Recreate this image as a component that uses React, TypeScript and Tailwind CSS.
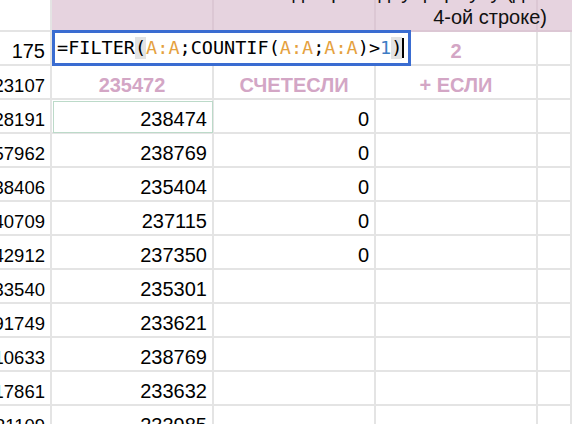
const colA = ["175", "23107", "28191", "57962", "38406", "40709", "42912", "33540", "91749", "10633", "17861", "31109"];
const colB = ["", "", "238474", "238769", "235404", "237115", "237350", "235301", "233621", "238769", "233632", "233985"];
const colC = ["", "", "0", "0", "0", "0", "0", "", "", "", "", ""];

const grid = "grid grid-cols-[52px_162px_162px_162px_1fr]";
const cell = "h-[34px] border-r-2 border-b-2 border-[#e4e4e4] overflow-hidden whitespace-nowrap";
const num = "flex justify-end pr-[5px] pt-[5px] leading-[29px] text-[20px] text-black";
const numA = "flex justify-end pr-[5px] pt-[5px] leading-[29px] text-[18.5px] text-black";
const pink = "flex justify-center pt-[5px] leading-[29px] text-[20px] font-bold text-[#d3a6c5]";

function Formula() {
  const orange = "text-[#e5a13e]";
  return (
    <div className="absolute left-[52px] top-[30px] w-[359px] h-[36px] border-[3px] border-[#3a6cd1] bg-white flex items-center pl-[2px]">
      <span className="font-['DejaVu_Sans_Mono',monospace] text-[18.5px] leading-[22px] text-black flex items-center">
        <span>=FILTER</span>
        <span className="bg-[#e3e3e3]">(</span>
        <span className={orange}>A:A</span>
        <span>;COUNTIF(</span>
        <span className={orange}>A:A</span>
        <span>;</span>
        <span className={orange}>A:A</span>
        <span>)&gt;</span>
        <span className="text-[#3d7cc4]">1</span>
        <span className="bg-[#e3e3e3]">)</span>
        <span className="w-[2px] h-[20px] bg-black" />
      </span>
    </div>
  );
}

export default function App() {
  return (
    <main className="relative w-[572px] h-[424px] overflow-hidden bg-white font-['Liberation_Sans',Arial,sans-serif]">
      {/* header row, clipped at top */}
      <div className={grid}>
        <div className="h-[32px] border-r-2 border-b-2 border-[#e4e4e4]" />
        <div className="h-[32px] bg-[#e6d3df] border-r-2 border-b-2 border-[#dcc7d4]" />
        <div className="col-span-3 h-[32px] bg-[#e6d3df] border-b-2 border-[#dcc7d4] overflow-hidden relative">
          <div className="grid grid-cols-[162px_162px_1fr] h-full">
            <div className="border-r-2 border-[#dcc7d4]" />
            <div className="border-r-2 border-[#dcc7d4]" />
            <div />
          </div>
          <div className="absolute left-[13px] top-[-20px] w-[320px] text-right text-[20px] leading-[25px] text-[#111]">
            Вывод через одну формулу (для
            <br />
            4-ой строке)
          </div>
        </div>
      </div>

      {/* row with formula */}
      <div className={grid}>
        <div className={`${cell} ${num}`}>{colA[0]}</div>
        <div className={cell} />
        <div className={cell} />
        <div className={`${cell} ${pink}`}>2</div>
        <div className={cell} />
      </div>

      {/* pink labels */}
      <div className={grid}>
        <div className={`${cell} ${numA}`}>{colA[1]}</div>
        <div className={`${cell} ${pink}`}>235472</div>
        <div className={`${cell} ${pink}`}>СЧЕТЕСЛИ</div>
        <div className={`${cell} ${pink}`}>+ ЕСЛИ</div>
        <div className={cell} />
      </div>

      {colA.slice(2).map((a, i) => (
        <div key={i} className={grid}>
          <div className={`${cell} ${numA}`}>{a}</div>
          <div className={`${cell} ${num} ${i === 0 ? "outline outline-[1.5px] outline-[#bcdac9] -outline-offset-2" : ""}`}>
            {colB[i + 2]}
          </div>
          <div className={`${cell} ${num}`}>{colC[i + 2]}</div>
          <div className={cell} />
          <div className={cell} />
        </div>
      ))}

      <Formula />
    </main>
  );
}
